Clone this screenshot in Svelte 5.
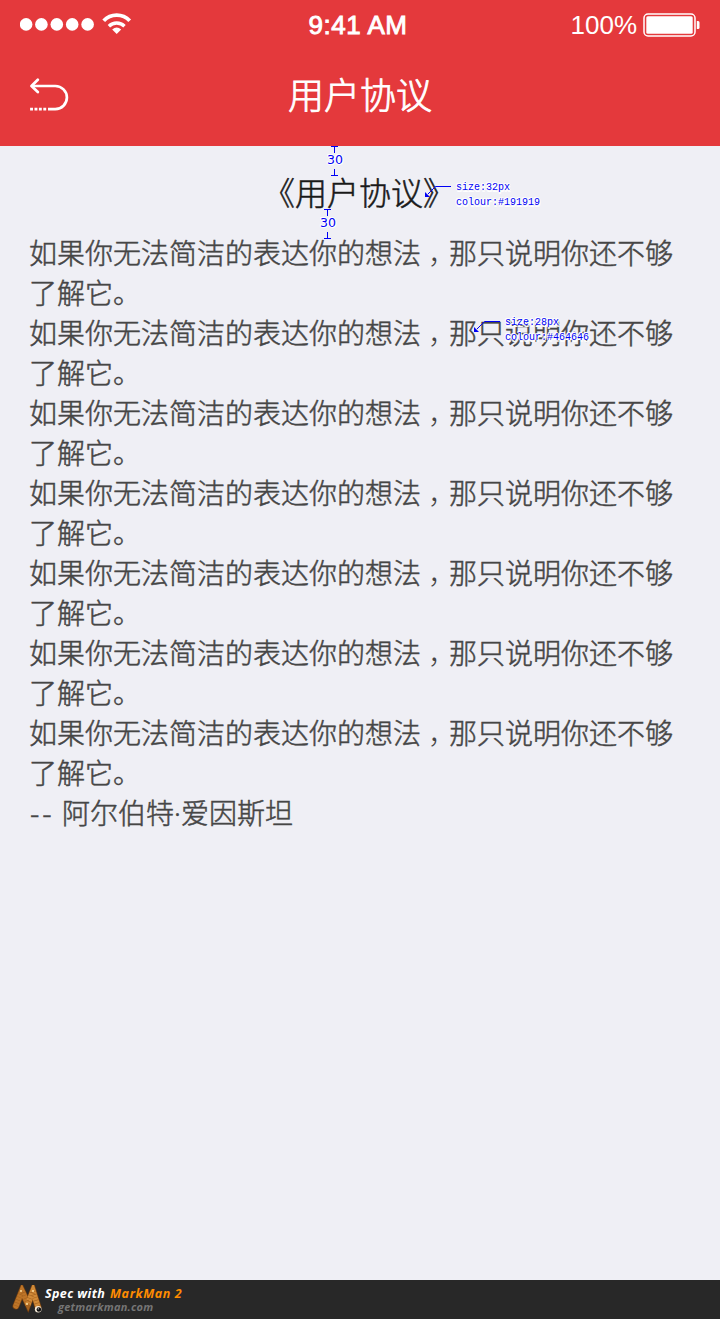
<script>
  const lines = Array.from({ length: 7 });
  const notes = [
    { x: 423, y: 180, size: '32px', colour: '#191919' },
    { x: 472, y: 315, size: '28px', colour: '#464646' }
  ];
  const gaps = [
    { x: 326, y: 146 },
    { x: 319, y: 209 }
  ];
</script>

<div class="screen">
  <header>
    <div class="status">
      <svg class="signal" width="114" height="26" viewBox="0 0 114 26">
        {#each [6.1, 21.4, 36.8, 52.2, 67.6] as cx}
          <circle {cx} cy="13.4" r="6.3" fill="#fff" />
        {/each}
        <g fill="none" stroke="#fff">
          <path d="M83.7 9.8A17.8 17.8 0 0 1 109.7 9.8" stroke-width="3.8" />
          <path d="M88.9 15.2A11.2 11.2 0 0 1 104.5 15.2" stroke-width="3.4" />
        </g>
        <path d="M92.2 18.6Q96.7 14.5 101.2 18.6L96.7 23Z" fill="#fff" />
      </svg>
      <span class="time">9:41 AM</span>
      <div class="power">
        <span>100%</span>
        <svg width="57" height="24" viewBox="0 0 57 24">
          <rect x="1" y="1" width="51" height="22" rx="4" fill="none" stroke="#fff" stroke-width="1.5" />
          <rect x="3.3" y="3.2" width="46.4" height="17.6" rx="1.5" fill="#fff" />
          <path d="M53.8 8H55.2Q56.5 8 56.5 9.5V14.5Q56.5 16 55.2 16H53.8Z" fill="#fff" />
        </svg>
      </div>
    </div>
    <nav>
      <svg class="back" width="40" height="34" viewBox="0 0 40 34" fill="none" stroke="#fff" stroke-width="2.7">
        <path d="M7.8 1.7L1.5 8L7.8 14" stroke-linecap="round" stroke-linejoin="round" />
        <path d="M2 8H25.3A11.6 11.6 0 0 1 25.3 31.2H18" />
        <path d="M.1 31.2H17" stroke-dasharray="2.9 1.5" />
      </svg>
      <h1>用户协议</h1>
    </nav>
  </header>

  <main>
    <h2>《用户协议》</h2>
    {#each lines as _}
      <p>如果你无法简洁的表达你的想法<span class="comma">，</span>那只说明你还不够了解它。</p>
    {/each}
    <p class="author"><span class="dashes">--</span><span>阿尔伯特<span class="dot">·</span>爱因斯坦</span></p>
  </main>

  <footer>
    <svg width="34" height="30" viewBox="0 0 34 30">
      <g fill="none" stroke-linecap="round">
        <path d="M5 21L11 6L17 19L22 6L27 22" stroke="#6f3d10" stroke-width="7" />
        <path d="M5 21L11 6L17 19" stroke="#bd7528" stroke-width="5.6" />
        <path d="M17 19L22 6L27 22" stroke="#d08a38" stroke-width="5.6" />
        <path d="M5 21L11 6L17 19L22 6L27 22" stroke="#a4621f" stroke-width="5.6" stroke-dasharray=".6 2.4" stroke-linecap="butt" />
      </g>
      <g fill="#ffe1a0">
        <circle cx="10" cy="6" r="1" />
        <circle cx="22" cy="6" r="1" />
        <circle cx="16" cy="19" r="1" />
      </g>
      <circle cx="27.2" cy="24.2" r="3.3" fill="#f6ead8" />
      <circle cx="27.9" cy="24.5" r="2.3" fill="#111" />
      <circle cx="27.2" cy="23.8" r=".6" fill="#fff" />
    </svg>
    <div class="brand">
      <strong><span class="spec">Spec with</span><span class="name">MarkMan 2</span></strong>
      <em>getmarkman.com</em>
    </div>
  </footer>

  {#each gaps as g}
    <div class="gap" style="left:{g.x}px;top:{g.y}px">
      <svg width="7" height="7"><path d="M0 .5H7M3.5 .5V7" /></svg>
      <span>30</span>
      <svg width="7" height="7"><path d="M0 6.5H7M3.5 0V6.5" /></svg>
    </div>
  {/each}

  {#each notes as n}
    <div class="note" style="left:{n.x}px;top:{n.y}px">
      <svg width="29" height="20" viewBox="0 0 29 20">
        <path d="M5 14L12.5 6.5H28" fill="none" stroke="#0000f5" />
        <path d="M2 17V12L7 17Z" fill="#0000f5" />
      </svg>
      <div><span>size:{n.size}</span><span>colour:{n.colour}</span></div>
    </div>
  {/each}
</div>

<style>
  :global(body) {
    margin: 0;
  }
  .screen {
    position: relative;
    display: flex;
    flex-direction: column;
    width: 720px;
    height: 1319px;
    overflow: hidden;
    background: #efeff5;
    font-family: "Noto Sans CJK SC", sans-serif;
    font-weight: 300;
  }
  header {
    height: 146px;
    background: #e4393c;
    color: #fff;
  }
  .status {
    display: grid;
    grid-template-columns: 1fr auto 1fr;
    align-items: center;
    height: 48px;
    padding: 0 20px;
    box-sizing: border-box;
    font-family: "Liberation Sans", sans-serif;
    font-size: 26px;
  }
  .time {
    font-size: 26px;
    font-weight: 400;
    letter-spacing: 0.5px;
    margin: 2px 4px 0 0;
    -webkit-text-stroke: 0.9px #fff;
  }
  .power {
    display: flex;
    justify-content: flex-end;
    align-items: center;
    gap: 6px;
    font-weight: 400;
  }
  .power span {
    padding-top: 2px;
  }
  .power svg {
    margin-top: 2px;
  }
  nav {
    display: grid;
    grid-template-columns: 100px 1fr 100px;
    align-items: center;
    height: 98px;
  }
  .back {
    margin: -4px 0 0 30px;
  }
  h1,
  h2,
  p {
    margin: 0;
    font-weight: inherit;
  }
  h1 {
    text-align: center;
    font-size: 36px;
    line-height: 90px;
    padding-bottom: 8px;
    -webkit-text-stroke: 0.8px #fff;
  }
  main {
    flex: 1;
    padding: 28px 30px 0 29px;
    color: #464646;
    font-size: 28px;
    line-height: 40px;
    -webkit-text-stroke: 0.5px currentColor;
  }
  h2 {
    height: 58px;
    margin-left: -1px;
    color: #191919;
    text-align: center;
    font-size: 32px;
    line-height: 34px;
  }
  .comma {
    padding-left: 7px;
    margin-right: -7px;
    -webkit-text-stroke: 0;
  }
  .author {
    display: flex;
  }
  .dashes {
    width: 32px;
    padding-left: 1px;
    letter-spacing: 3px;
  }
  .dot {
    display: inline-block;
    width: 7px;
    font-family: "Noto Sans", sans-serif;
    line-height: 1;
  }
  footer {
    display: flex;
    height: 39px;
    background: #282828;
    font-family: "Open Sans", sans-serif;
  }
  footer svg {
    margin: 5px 0 0 11px;
  }
  .brand {
    display: flex;
    flex-direction: column;
    white-space: nowrap;
    font-style: italic;
  }
  strong {
    display: flex;
    gap: 5px;
    height: 19px;
    padding-top: 5px;
    box-sizing: border-box;
    font-size: 12.5px;
    font-weight: 700;
    line-height: 18px;
    color: #fff;
  }
  .spec {
    width: 60px;
    letter-spacing: 0.4px;
  }
  .name {
    color: #ff8c00;
    letter-spacing: 0.6px;
  }
  em {
    margin-left: 13px;
    color: #757575;
    font-size: 11px;
    font-weight: 700;
    letter-spacing: 0.25px;
    line-height: 16px;
  }
  .gap {
    position: absolute;
    display: flex;
    flex-direction: column;
    align-items: center;
    width: 18px;
    height: 30px;
    justify-content: space-between;
    color: #0000f5;
    font: 12.5px "DejaVu Sans", sans-serif;
    line-height: 12px;
  }
  .gap svg {
    display: block;
    fill: none;
    stroke: #0000f5;
    margin-right: 1px;
  }
  .gap span,
  .note span {
    text-shadow: 1px 0 #fff, -1px 0 #fff, 0 1px #fff, 0 -1px #fff, 1px 1px #fff, -1px -1px #fff;
  }
  .gap span {
    margin-top: -2px;
  }
  .note {
    position: absolute;
    display: flex;
    gap: 4px;
    color: #0000f5;
    font: 10px "Liberation Mono", monospace;
    line-height: 15px;
  }
  .note div {
    display: flex;
    flex-direction: column;
  }
  .note span {
    transform: scaleY(1.15);
  }
</style>
